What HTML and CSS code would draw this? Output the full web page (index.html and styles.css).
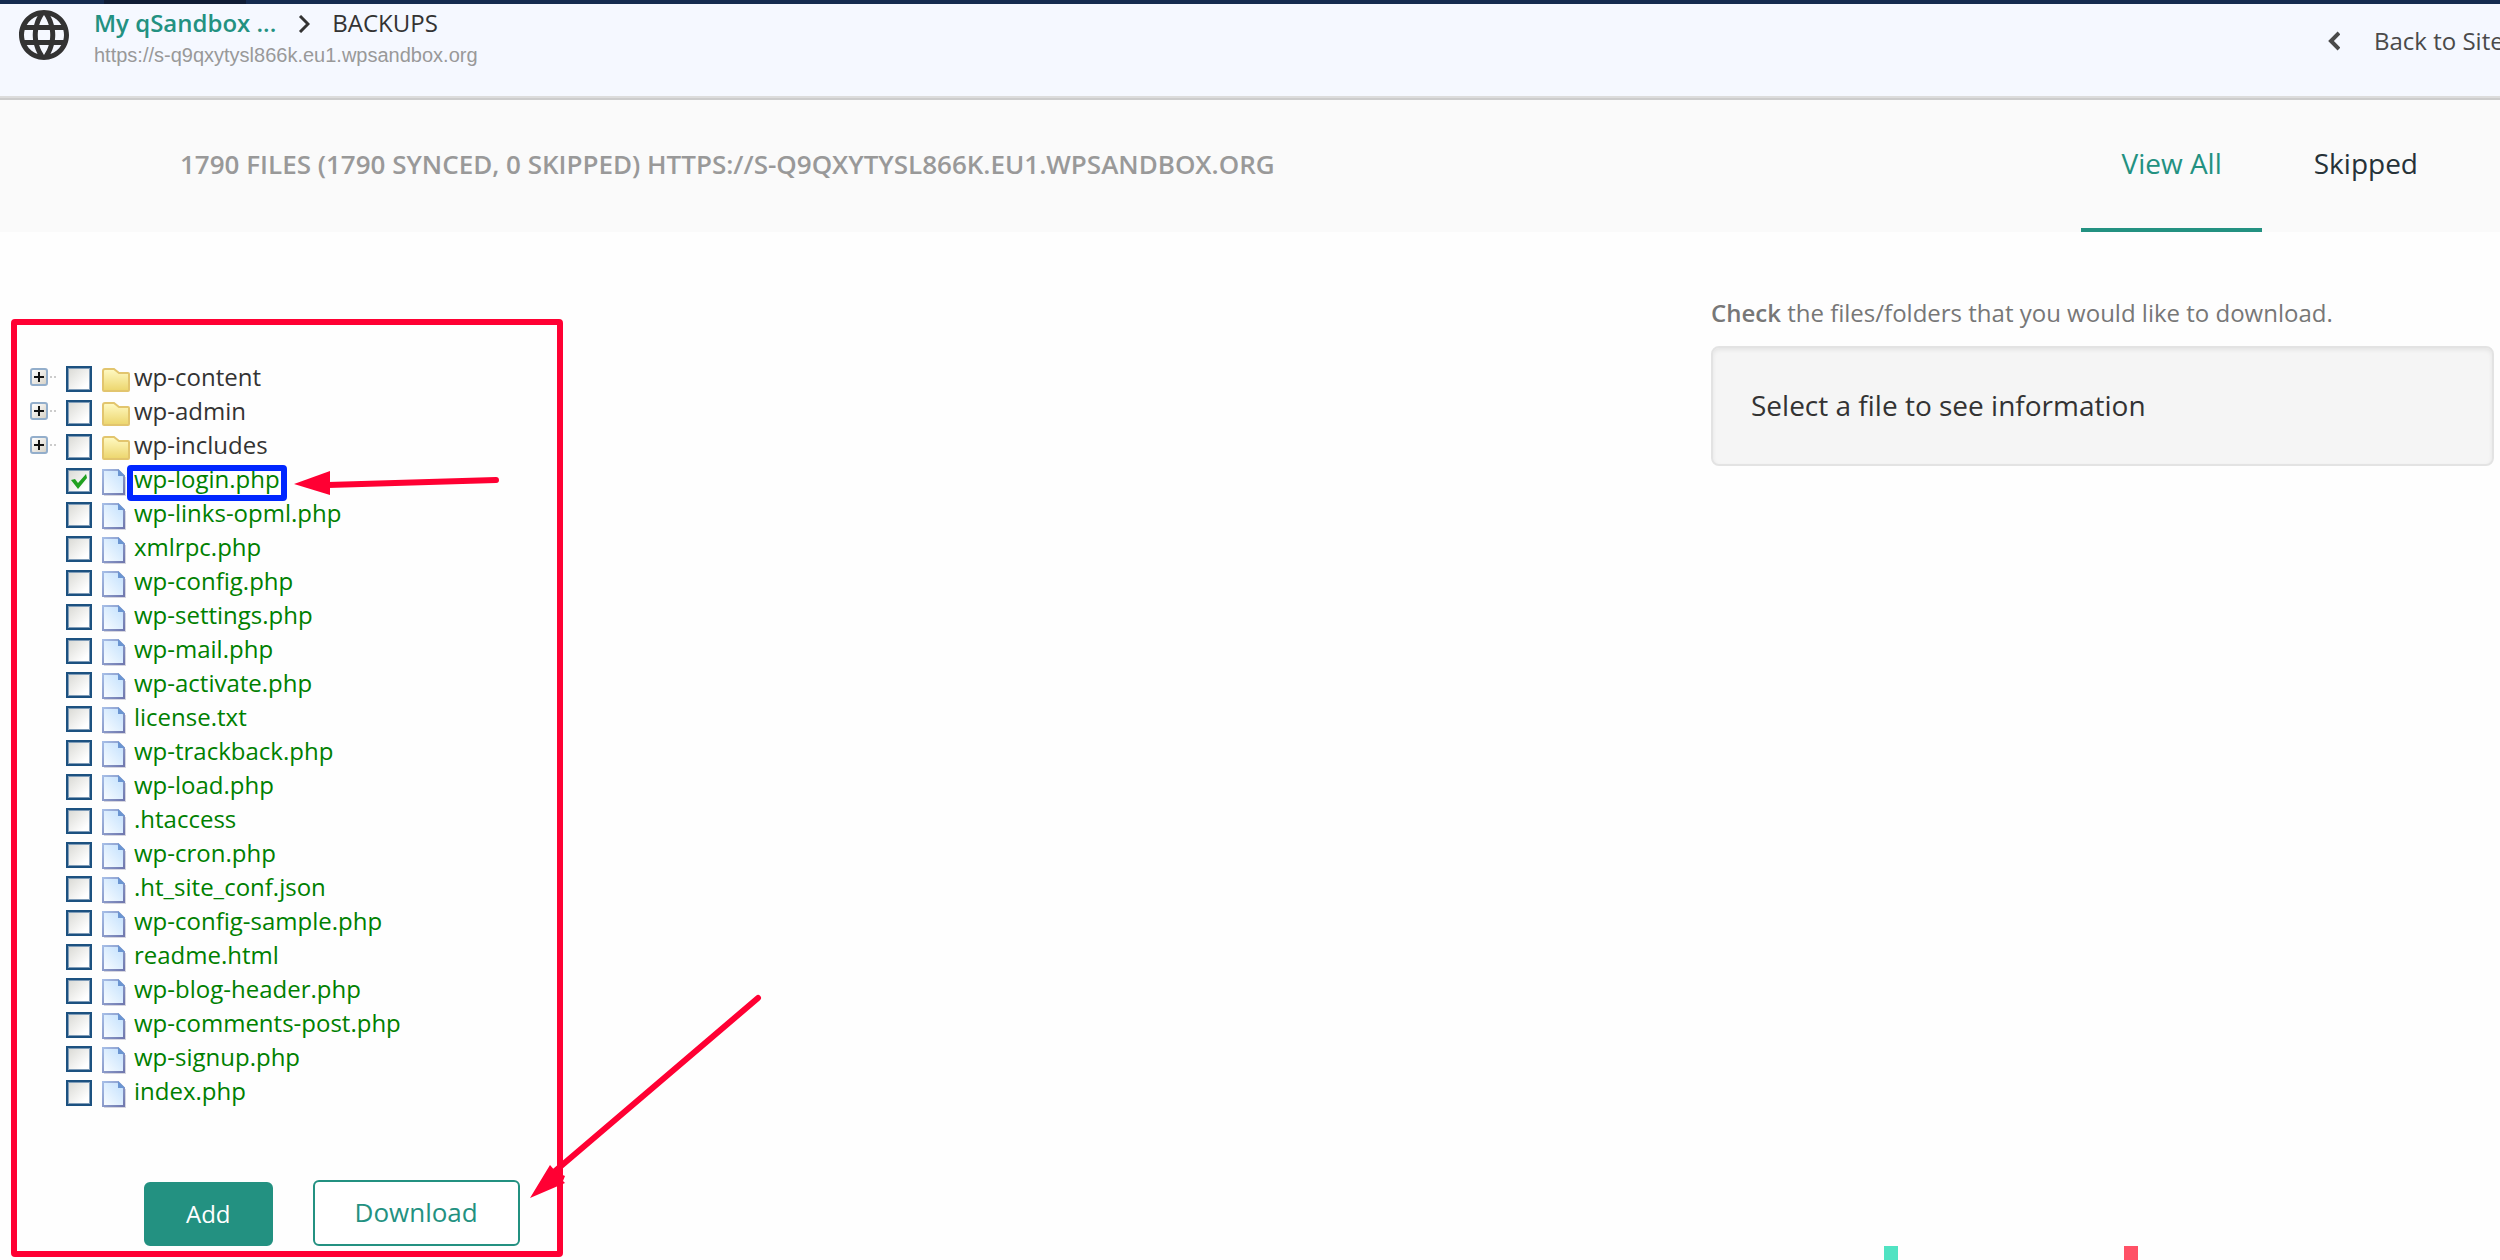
FILE: index.html
```html
<!DOCTYPE html>
<html lang="en">
<head>
  <meta charset="utf-8">
  <title>Backups</title>
  <link rel="stylesheet" href="styles.css">
</head>
<body>
  <svg class="sprite" aria-hidden="true">
    <defs>
      <linearGradient id="folderFill" x1="0" y1="0" x2="0" y2="1">
        <stop offset="0" stop-color="#fffac4"/>
        <stop offset="1" stop-color="#ecd56c"/>
      </linearGradient>
      <linearGradient id="fileFill" x1="0" y1="1" x2="1" y2="0">
        <stop offset="0" stop-color="#fafdff"/>
        <stop offset="1" stop-color="#c0dffd"/>
      </linearGradient>
      <linearGradient id="fileEdge" x1="0" y1="0" x2="1" y2="1">
        <stop offset="0" stop-color="#a5bde6"/>
        <stop offset="1" stop-color="#7078ae"/>
      </linearGradient>
    </defs>
    <symbol id="folder" viewBox="0 0 28 28">
      <path d="M1 6q0-2 2-2h9l5 4h9q1 0 1 1v16q0 1-1 1H2q-1 0-1-1z" fill="url(#folderFill)" stroke="#e2c56e" stroke-width="2"/>
    </symbol>
    <symbol id="file" viewBox="0 0 28 28">
      <path d="M2 27h21V9" fill="none" stroke="#9a9cb4" stroke-opacity=".4" stroke-width="2"/>
      <path d="M1 2h15l6 6v18H1z" fill="url(#fileFill)" stroke="url(#fileEdge)" stroke-width="2"/>
      <path d="M16 1v7h7z" fill="#6b95d2"/>
    </symbol>
  </svg>

  <div class="topbar"><div class="topbar-active"></div></div>

  <header class="header">
    <svg class="globe" viewBox="0 0 24 24"><path fill="#333" d="M11.99 2C6.47 2 2 6.48 2 12s4.47 10 9.99 10C17.52 22 22 17.52 22 12S17.52 2 11.99 2zm6.93 6h-2.95c-.32-1.25-.78-2.45-1.38-3.56 1.84.63 3.37 1.91 4.33 3.56zM12 4.04c.83 1.2 1.48 2.53 1.91 3.96h-3.82c.43-1.43 1.08-2.76 1.91-3.96zM4.26 14C4.1 13.36 4 12.69 4 12s.1-1.36.26-2h3.38c-.08.66-.14 1.32-.14 2 0 .68.06 1.34.14 2H4.26zm.82 2h2.95c.32 1.25.78 2.45 1.38 3.56-1.84-.63-3.37-1.9-4.33-3.56zm2.95-8H5.08c.96-1.66 2.49-2.93 4.33-3.56C8.81 5.55 8.35 6.75 8.03 8zM12 19.96c-.83-1.2-1.48-2.53-1.91-3.96h3.82c-.43 1.43-1.08 2.76-1.91 3.96zM14.34 14H9.66c-.09-.66-.16-1.32-.16-2 0-.68.07-1.35.16-2h4.68c.09.65.16 1.32.16 2 0 .68-.07 1.34-.16 2zm.25 5.56c.6-1.11 1.06-2.31 1.38-3.56h2.95c-.96 1.65-2.49 2.93-4.33 3.56zM16.36 14c.08-.66.14-1.32.14-2 0-.68-.06-1.34-.14-2h3.38c.16.64.26 1.31.26 2s-.1 1.36-.26 2h-3.38z"/></svg>
    <div class="site">
      <div class="crumbs">
        <a href="#">My qSandbox ...</a>
        <svg class="crumb-arrow" viewBox="0 0 12 18"><path d="M2 1l8 8-8 8" fill="none" stroke="#333" stroke-width="3"/></svg>
        <span>BACKUPS</span>
      </div>
      <div class="site-url">https://s-q9qxytysl866k.eu1.wpsandbox.org</div>
    </div>
    <a class="back" href="#">
      <svg class="back-arrow" viewBox="0 0 12 20"><path d="M11 2L3 10l8 8" fill="none" stroke="#4a4a4a" stroke-width="4"/></svg>
      <span>Back to Site</span>
    </a>
  </header>

  <div class="toolbar">
    <h1>1790 FILES (1790 SYNCED, 0 SKIPPED) HTTPS://S-Q9QXYTYSL866K.EU1.WPSANDBOX.ORG</h1>
    <nav class="tabs">
      <a class="tab active" href="#">View All</a>
      <a class="tab" href="#">Skipped</a>
    </nav>
  </div>

  <main class="content">
    <section class="panel">
      <ul class="tree" id="tree"></ul>
      <div class="actions">
        <button class="btn btn-add" type="button">Add</button>
        <button class="btn btn-download" type="button">Download</button>
      </div>
      <svg class="arrow arrow-file" viewBox="0 0 210 30">
        <path d="M34 16L202 11" stroke="#ff0033" stroke-width="6" stroke-linecap="round"/>
        <path d="M0 15L36 2v24z" fill="#ff0033"/>
      </svg>
      <svg class="arrow arrow-download" viewBox="0 0 240 210">
        <path d="M24 182L228 8" stroke="#ff0033" stroke-width="6" stroke-linecap="round"/>
        <path d="M0 208L20 175l6 7 9 4-2 5 2 2z" fill="#ff0033"/>
      </svg>
    </section>

    <aside class="info">
      <p><b>Check</b> the files/folders that you would like to download.</p>
      <div class="well">Select a file to see information</div>
      <div class="legend">
        <span class="swatch swatch-green"></span>
        <span class="swatch swatch-red"></span>
      </div>
    </aside>
  </main>

  <script src="script.js"></script>
</body>
</html>
```
FILE: styles.css
```css
* {
  box-sizing: border-box;
}

body {
  margin: 0;
  min-height: 100vh;
  display: flex;
  flex-direction: column;
  overflow: hidden;
  background-color: #fefefe;
  color: #333;
  font-family: "Open Sans", sans-serif;
  font-size: 24px;
}

a {
  color: inherit;
  text-decoration: none;
}

.sprite {
  position: absolute;
  width: 0;
  height: 0;
}

.topbar {
  height: 4px;
  padding-left: 104px;
  background-color: #152b50;
}

.topbar-active {
  width: 142px;
  height: 4px;
  background-color: #101c35;
}

.header {
  display: flex;
  height: 96px;
  padding-left: 14px;
  background-color: #f5f8ff;
  border-bottom: 2px solid #ccc;
  box-shadow: inset 0 -2px #dcdcdc;
}

.globe {
  width: 60px;
  height: 60px;
  margin-top: 1px;
}

.site {
  padding: 4px 0 0 20px;
}

.crumbs {
  display: flex;
  align-items: center;
  line-height: 30px;
  font-weight: 600;
}

.crumbs span {
  font-weight: 500;
}

.crumbs a {
  color: #239181;
}

.crumb-arrow {
  width: 12px;
  height: 18px;
  margin: 2px 22px 0;
}

.site-url {
  color: #999;
  font: 20px/34px "Liberation Sans", sans-serif;
}

.back {
  display: flex;
  align-items: center;
  width: 172px;
  height: 74px;
  margin-left: auto;
  gap: 34px;
  overflow: hidden;
  white-space: nowrap;
  color: #4a4a4a;
  line-height: 30px;
}

.back span {
  padding-bottom: 1px;
}

.back-arrow {
  flex: none;
  width: 12px;
  height: 20px;
}

.toolbar {
  display: flex;
  justify-content: space-between;
  height: 132px;
  padding: 0 42px 0 180px;
  background-color: #fafafa;
}

.toolbar h1 {
  margin: 0;
  color: #999;
  font-size: 26px;
  font-weight: 600;
  line-height: 128px;
}

.tabs {
  display: flex;
  gap: 12px;
}

.tab {
  padding: 0 40px;
  color: #263238;
  font-size: 28px;
  line-height: 126px;
}

.tab.active {
  color: #239181;
  border-bottom: 4px solid #239181;
}

.content {
  display: flex;
  flex: 1;
  justify-content: space-between;
  align-items: flex-start;
  padding: 0 6px 0 11px;
}

.panel {
  position: relative;
  width: 552px;
  margin-top: 87px;
  padding: 35px 13px 5px;
  border: 6px solid #ff0033;
  border-radius: 4px;
}

.tree {
  margin: 0;
  padding: 0;
  list-style: none;
}

.tree li {
  display: flex;
  align-items: flex-end;
  height: 34px;
}

.expander {
  width: 18px;
  height: 18px;
  margin-bottom: 8px;
  padding: 0;
  border: 2px solid #93aecb;
  border-radius: 3px;
  background: linear-gradient(135deg, #fff, #d8d3c8);
}

.expander svg {
  display: block;
  width: 14px;
  height: 14px;
}

.twig {
  width: 6px;
  margin: 0 10px 16px 2px;
  border-top: 2px dotted #ccc;
}

.leaf {
  padding-left: 36px;
}

.tree input {
  appearance: none;
  width: 26px;
  height: 26px;
  margin: 0 10px 2px 0;
  border: 2px solid #1c5180;
  background: linear-gradient(135deg, #d9d9d4, #fff 80%);
  box-shadow: inset 0 0 0 1px #7f9cb8;
}

.tree input:checked {
  background: url("data:image/svg+xml,%3Csvg xmlns='http://www.w3.org/2000/svg' viewBox='0 0 22 22'%3E%3Cpath d='M3 10l4-1 3 4 8-9 1 4-9 11z' fill='%2321a121'/%3E%3C/svg%3E"), linear-gradient(135deg, #d9d9d4, #fff 80%);
}

.icon {
  width: 28px;
  height: 28px;
}

.tree label {
  position: relative;
  margin-left: 4px;
  line-height: 34px;
}

.branch .icon {
  margin-bottom: 1px;
}

.leaf label {
  color: #008000;
}

.marked::after {
  content: "";
  position: absolute;
  inset: 3px -7px -5px -7px;
  border: 6px solid #0026ff;
  border-radius: 4px;
}

.actions {
  display: flex;
  align-items: flex-end;
  gap: 40px;
  margin-top: 72px;
  padding-left: 114px;
}

.btn {
  height: 64px;
  padding: 0 40px 2px;
  border: 2px solid #239181;
  border-radius: 6px;
  font-family: inherit;
  font-size: 24px;
}

.btn-add {
  background-color: #239181;
  color: #fff;
}

.btn-download {
  height: 66px;
  background-color: #fff;
  color: #239181;
  font-size: 26px;
}

.arrow {
  position: absolute;
  fill: none;
}

.arrow-file {
  left: 277px;
  top: 144px;
  width: 210px;
  height: 30px;
}

.arrow-download {
  left: 513px;
  top: 665px;
  width: 240px;
  height: 210px;
}

.info {
  display: flex;
  flex-direction: column;
  align-self: stretch;
  width: 783px;
}

.info p {
  margin: 64px 0 16px;
  color: #777;
  line-height: 34px;
}

.info b {
  font-weight: 600;
}

.well {
  height: 120px;
  padding: 0 38px;
  border: 2px solid #e3e3e3;
  border-radius: 8px;
  background-color: #f5f5f5;
  box-shadow: inset 0 2px 4px rgba(0, 0, 0, 0.07);
  font-size: 28px;
  line-height: 114px;
}

.legend {
  display: flex;
  gap: 226px;
  margin-top: auto;
  padding-left: 173px;
}

.swatch {
  width: 14px;
  height: 14px;
}

.swatch-green {
  background-color: #50e3c2;
}

.swatch-red {
  background-color: #ff5166;
}
```
FILE: script.js
```js
const folders = ["wp-content", "wp-admin", "wp-includes"];

const files = [
  "wp-login.php", "wp-links-opml.php", "xmlrpc.php", "wp-config.php",
  "wp-settings.php", "wp-mail.php", "wp-activate.php", "license.txt",
  "wp-trackback.php", "wp-load.php", ".htaccess", "wp-cron.php",
  ".ht_site_conf.json", "wp-config-sample.php", "readme.html",
  "wp-blog-header.php", "wp-comments-post.php", "wp-signup.php", "index.php"
];

const selected = "wp-login.php";
const tree = document.getElementById("tree");

function addRow(name, isFolder) {
  const row = document.createElement("li");
  const checked = name === selected;
  const expander = `<button class="expander" type="button" aria-label="Expand ${name}"><svg viewBox="0 0 14 14"><path d="M2 7h10M7 2v10" stroke="#111" stroke-width="2"/></svg></button><span class="twig"></span>`;

  row.className = isFolder ? "branch" : "leaf";
  row.innerHTML = `${isFolder ? expander : ""}
    <input type="checkbox" id="${name}" ${checked ? "checked" : ""}>
    <svg class="icon"><use href="#${isFolder ? "folder" : "file"}"/></svg>
    <label for="${name}" class="${checked ? "marked" : ""}">${name}</label>`;
  tree.appendChild(row);
}

folders.forEach(name => addRow(name, true));
files.forEach(name => addRow(name, false));
```
